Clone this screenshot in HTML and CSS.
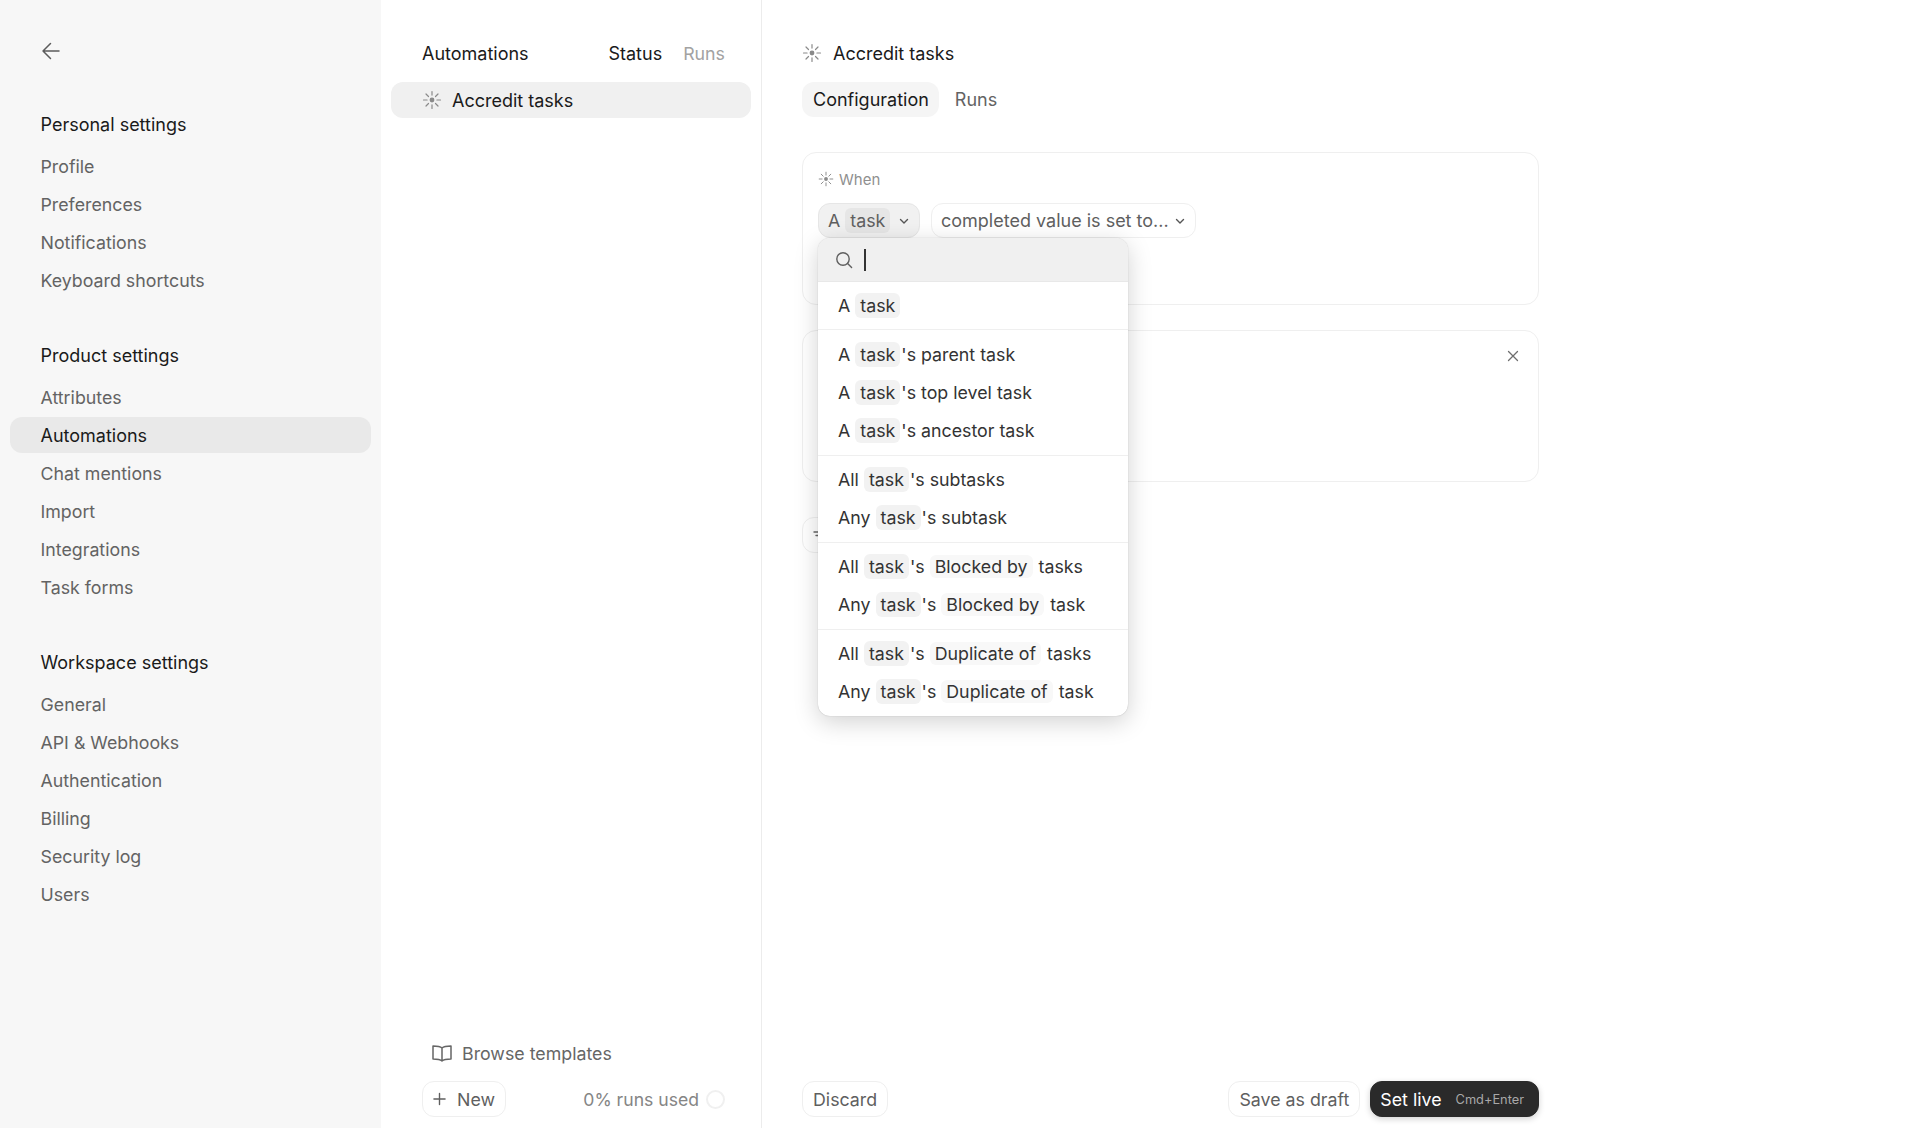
FILE: index.html
```html
<!DOCTYPE html>
<html lang="en">
<head>
<meta charset="utf-8">
<title>Automations</title>
<link rel="stylesheet" href="styles.css">
</head>
<body>
<svg class="defs" width="0" height="0" aria-hidden="true">
  <symbol id="sun" viewBox="0 0 20 20">
    <circle cx="10" cy="10" r="2.4" fill="currentColor"/>
    <path d="M10 1.5v3.6M10 14.9v3.6M1.5 10h3.6M14.9 10h3.6M4 4l2.5 2.5M13.5 13.5L16 16M16 4l-2.5 2.5M6.5 13.5L4 16" fill="none" stroke="currentColor" stroke-width="1.2" stroke-linecap="round"/>
  </symbol>
  <symbol id="chev" viewBox="0 0 12 12">
    <path d="M2.5 4.5L6 8l3.5-3.5" fill="none" stroke="currentColor" stroke-width="1.4" stroke-linecap="round" stroke-linejoin="round"/>
  </symbol>
</svg>
<div class="app">
  <aside class="sidebar">
    <div class="back">
      <svg width="20" height="20" viewBox="0 0 20 20" fill="none" stroke="currentColor" stroke-width="1.5" stroke-linecap="round" stroke-linejoin="round"><path d="M18 10H2M9.500 2.500L2 10l7.500 7.500"/></svg>
    </div>
    <section class="group">
      <h2 class="group-title">Personal settings</h2>
      <div class="nav-item">Profile</div>
      <div class="nav-item">Preferences</div>
      <div class="nav-item">Notifications</div>
      <div class="nav-item">Keyboard shortcuts</div>
    </section>
    <section class="group">
      <h2 class="group-title">Product settings</h2>
      <div class="nav-item">Attributes</div>
      <div class="nav-item nav-active">Automations</div>
      <div class="nav-item">Chat mentions</div>
      <div class="nav-item">Import</div>
      <div class="nav-item">Integrations</div>
      <div class="nav-item">Task forms</div>
    </section>
    <section class="group">
      <h2 class="group-title">Workspace settings</h2>
      <div class="nav-item">General</div>
      <div class="nav-item">API &amp; Webhooks</div>
      <div class="nav-item">Authentication</div>
      <div class="nav-item">Billing</div>
      <div class="nav-item">Security log</div>
      <div class="nav-item">Users</div>
    </section>
  </aside>

  <main class="list-pane">
    <header class="list-head">
      <span class="list-title">Automations</span>
      <span class="col-status">Status</span>
      <span class="col-runs">Runs</span>
    </header>
    <div class="list-row">
      <svg class="sun-lg" width="20" height="20"><use href="#sun"/></svg>
      <span>Accredit tasks</span>
    </div>
    <footer class="list-foot">
      <div class="browse">
        <svg width="22" height="20" viewBox="0 0 22 20" fill="none" stroke="currentColor" stroke-width="1.5" stroke-linejoin="round"><path d="M11 5C9.500 3.600 7 3 2 3v13c5 0 7.500.6 9 2 1.500-1.400 4-2 9-2V3c-5 0-7.500.6-9 2zM11 5v13"/></svg>
        <span>Browse templates</span>
      </div>
      <div class="foot-row">
        <button class="btn btn-new">
          <svg width="14" height="14" viewBox="0 0 14 14" fill="none" stroke="currentColor" stroke-width="1.5" stroke-linecap="round"><path d="M7 1v12M1 7h12"/></svg>
          New
        </button>
        <span class="usage">0% runs used</span>
        <span class="usage-ring"></span>
      </div>
    </footer>
  </main>

  <section class="detail">
    <header class="detail-head">
      <svg class="sun-lg" width="20" height="20"><use href="#sun"/></svg>
      <span>Accredit tasks</span>
    </header>
    <nav class="tabs">
      <span class="tab tab-active">Configuration</span>
      <span class="tab">Runs</span>
    </nav>
    <div class="card card-when">
      <div class="when-label">
        <svg class="sun-sm" width="16" height="16"><use href="#sun"/></svg>
        <span>When</span>
      </div>
      <div class="chips">
        <div class="picker">
          <button class="chip chip-open">
            <span class="letter">A</span><span class="tag tag-dark">task</span>
            <svg class="chev" width="12" height="12"><use href="#chev"/></svg>
          </button>
          <div class="dropdown">
            <div class="search">
              <svg width="20" height="20" viewBox="0 0 20 20" fill="none" stroke="currentColor" stroke-width="1.4" stroke-linecap="round"><circle cx="9" cy="9" r="6.200"/><path d="M13.600 13.600l4 4"/></svg>
              <span class="caret"></span>
            </div>
            <div class="opt-group">
              <div class="opt">A<span class="tag">task</span></div>
            </div>
            <div class="opt-group">
              <div class="opt">A<span class="tag">task</span>'s parent task</div>
              <div class="opt">A<span class="tag">task</span>'s top level task</div>
              <div class="opt">A<span class="tag">task</span>'s ancestor task</div>
            </div>
            <div class="opt-group">
              <div class="opt">All<span class="tag">task</span>'s subtasks</div>
              <div class="opt">Any<span class="tag">task</span>'s subtask</div>
            </div>
            <div class="opt-group">
              <div class="opt">All<span class="tag">task</span>'s<span class="rel">Blocked by</span>tasks</div>
              <div class="opt">Any<span class="tag">task</span>'s<span class="rel">Blocked by</span>task</div>
            </div>
            <div class="opt-group">
              <div class="opt">All<span class="tag">task</span>'s<span class="rel">Duplicate of</span>tasks</div>
              <div class="opt">Any<span class="tag">task</span>'s<span class="rel">Duplicate of</span>task</div>
            </div>
          </div>
        </div>
        <button class="chip chip-event">
          completed value is set to...
          <svg class="chev" width="12" height="12"><use href="#chev"/></svg>
        </button>
      </div>
    </div>
    <div class="card card-then">
      <svg class="close" width="14" height="14" viewBox="0 0 14 14" fill="none" stroke="currentColor" stroke-width="1.300" stroke-linecap="round"><path d="M2.500 2.500l9 9M11.500 2.500l-9 9"/></svg>
    </div>
    <button class="btn btn-add">
      <svg width="14" height="14" viewBox="0 0 14 14" fill="none" stroke="currentColor" stroke-width="1.400" stroke-linecap="round"><path d="M1 4h12M3 7.500h8"/></svg>
    </button>
    <footer class="detail-foot">
      <button class="btn">Discard</button>
      <div class="foot-actions">
        <button class="btn">Save as draft</button>
        <button class="btn btn-live">Set live <span class="kbd">Cmd+Enter</span></button>
      </div>
    </footer>
  </section>
</div>
</body>
</html>
```

FILE: styles.css
```css
* { box-sizing: border-box; }
html, body { margin: 0; height: 100%; }
body {
  font-family: Inter, "Liberation Sans", sans-serif;
  font-size: 17.8px;
  color: #262626;
  background: #fff;
  overflow: hidden;
}
.defs { position: absolute; }
button { font: inherit; cursor: pointer; }

.app {
  display: grid;
  grid-template-columns: 381px 381px 1fr;
  height: 1128px;
}

/* Sidebar */
.sidebar {
  background: #f7f7f7;
  padding: 0 10px;
}
.back {
  color: #5c5c5c;
  padding: 41px 0 0 31px;
  height: 106px;
}
.back svg { display: block; }
.group { margin-bottom: 37px; }
.group-title {
  margin: 0 0 4px;
  padding-left: 30.5px;
  font-size: 18px;
  font-weight: 400;
  line-height: 38px;
  color: #1a1a1a;
}
.nav-item {
  height: 38px;
  line-height: 38px;
  padding-left: 30.5px;
  color: #636363;
  position: relative;
  isolation: isolate;
}
.nav-active {
  color: #1a1a1a;
  font-size: 18px;
}
.nav-active::before {
  content: "";
  position: absolute;
  inset: 0 0 2px;
  background: #e9e9e9;
  border-radius: 12px;
  z-index: -1;
}

/* List pane */
.list-pane {
  display: flex;
  flex-direction: column;
  border-right: 1px solid #ececec;
  padding: 35px 10px 11px;
}
.list-head {
  display: flex;
  align-items: center;
  height: 36px;
  padding: 0 26px 0 31px;
  margin-bottom: 11px;
  font-size: 18px;
  color: #1a1a1a;
}
.list-title { flex: 1; }
.col-status { margin-right: 21px; }
.col-runs { color: #a2a2a2; font-size: 17.8px; }
.list-row {
  display: flex;
  align-items: center;
  gap: 10px;
  height: 36px;
  padding-left: 31px;
  background: #f0f0f0;
  border-radius: 12px;
  font-size: 18px;
  color: #1a1a1a;
}
.sun-lg { color: #8a8a8a; flex: none; }
.list-foot { margin-top: auto; }
.browse {
  display: flex;
  align-items: center;
  gap: 9px;
  height: 38px;
  padding-left: 40px;
  margin-bottom: 9px;
  color: #666;
}
.foot-row {
  display: flex;
  align-items: center;
  padding-left: 31px;
  height: 36px;
}
.btn {
  display: inline-flex;
  align-items: center;
  height: 36px;
  padding: 0 10px;
  border: 1px solid #efefef;
  border-radius: 12px;
  background: #fff;
  color: #5f5f5f;
}
.btn-new { gap: 11px; width: 84px; }
.usage { margin-left: auto; color: #858585; font-size: 17.6px; }
.usage-ring {
  width: 19px;
  height: 19px;
  margin: 0 26px 0 7px;
  border: 2px solid #f0f0f0;
  border-radius: 50%;
}

/* Detail */
.detail {
  display: flex;
  flex-direction: column;
  padding: 35px 21px 11px 40px;
  width: 778px;
}
.detail-head {
  display: flex;
  align-items: center;
  gap: 11px;
  height: 36px;
  margin-bottom: 11px;
  font-size: 18px;
  color: #1a1a1a;
}
.tabs { display: flex; gap: 5px; margin-bottom: 35px; }
.tab {
  display: flex;
  align-items: center;
  height: 35px;
  padding: 0 10px 0 11px;
  border-radius: 12px;
  color: #636363;
  font-size: 18px;
}
.tab-active { background: #f5f5f5; color: #1a1a1a; }
.card {
  border: 1px solid #efefef;
  border-radius: 14px;
  width: 737px;
  height: 152px;
  margin-bottom: 26px;
}
.card-when { padding: 16px 15px 0; height: 153px; margin-bottom: 25px; }
.card-then {
  display: flex;
  justify-content: flex-end;
  padding: 18px 18px 0 0;
  margin-bottom: 35px;
}
.close { color: #6e6e6e; }
.btn-add { width: 70px; color: #666; flex: none; }
.when-label {
  display: flex;
  align-items: center;
  gap: 5px;
  height: 20px;
  font-size: 15px;
  color: #8f8f8f;
  margin-bottom: 14px;
}
.sun-sm { color: #8a8a8a; }
.chips { display: flex; gap: 11px; }
.picker { position: relative; }
.chip {
  display: flex;
  align-items: center;
  gap: 5px;
  height: 35px;
  padding: 0 9px;
  border: 1px solid #efefef;
  border-radius: 12px;
  background: #fff;
  color: #5f5f5f;
  white-space: nowrap;
}
.chip-open {
  gap: 0;
  background: #f1f1f1;
  border-color: #e6e6e6;
  width: 102px;
}
.chip-event { font-size: 18px; width: 265px; }
.letter { margin-right: 5px; }
.chev { color: #555; flex: none; }
.chip-open .chev { margin-left: 8px; }
.tag {
  display: inline-block;
  margin: 0 1px 0 5px;
  padding: 0 5px;
  height: 25px;
  line-height: 25px;
  background: #f2f2f2;
  border-radius: 6px;
}
.tag-dark { background: #e6e6e6; margin: 0; }
.rel {
  display: inline-block;
  margin: 0 6px 0 5px;
  padding: 0 5px;
  height: 23px;
  line-height: 23px;
  background: #f8f8f8;
  border-radius: 6px;
}
.dropdown {
  position: absolute;
  top: 35px;
  left: 0;
  z-index: 5;
  width: 310px;
  background: #fff;
  border-radius: 12px;
  overflow: hidden;
  box-shadow: 0 0 1px rgba(0,0,0,.3), 0 6px 24px rgba(0,0,0,.18);
}
.search {
  display: flex;
  align-items: center;
  gap: 10px;
  height: 44px;
  padding-left: 16px;
  background: #f0f0f0;
  border-bottom: 1px solid #e8e8e8;
  color: #5f5f5f;
}
.caret {
  width: 2px;
  height: 22px;
  background: #333;
}
.opt-group {
  padding: 5px 0;
  border-bottom: 1px solid #efefef;
}
.opt-group:nth-child(2) { padding: 5px 0 4px; }
.opt-group:nth-child(3) { padding-top: 6px; }
.opt-group:last-child { border-bottom: 0; }
.opt {
  display: flex;
  align-items: center;
  height: 38px;
  padding: 0 0 2px 20px;
  color: #333;
  white-space: nowrap;
}

.detail-foot {
  display: flex;
  justify-content: space-between;
  margin-top: auto;
  width: 737px;
}
.foot-actions { display: flex; gap: 10px; }
.btn-live {
  gap: 14px;
  padding: 0 14px 0 9px;
  background: #2a2a2a;
  border-color: #2a2a2a;
  color: #fff;
  box-shadow: 0 2px 6px rgba(0,0,0,.18);
}
.kbd { font-size: 12.8px; color: #a8a8a8; }
```
